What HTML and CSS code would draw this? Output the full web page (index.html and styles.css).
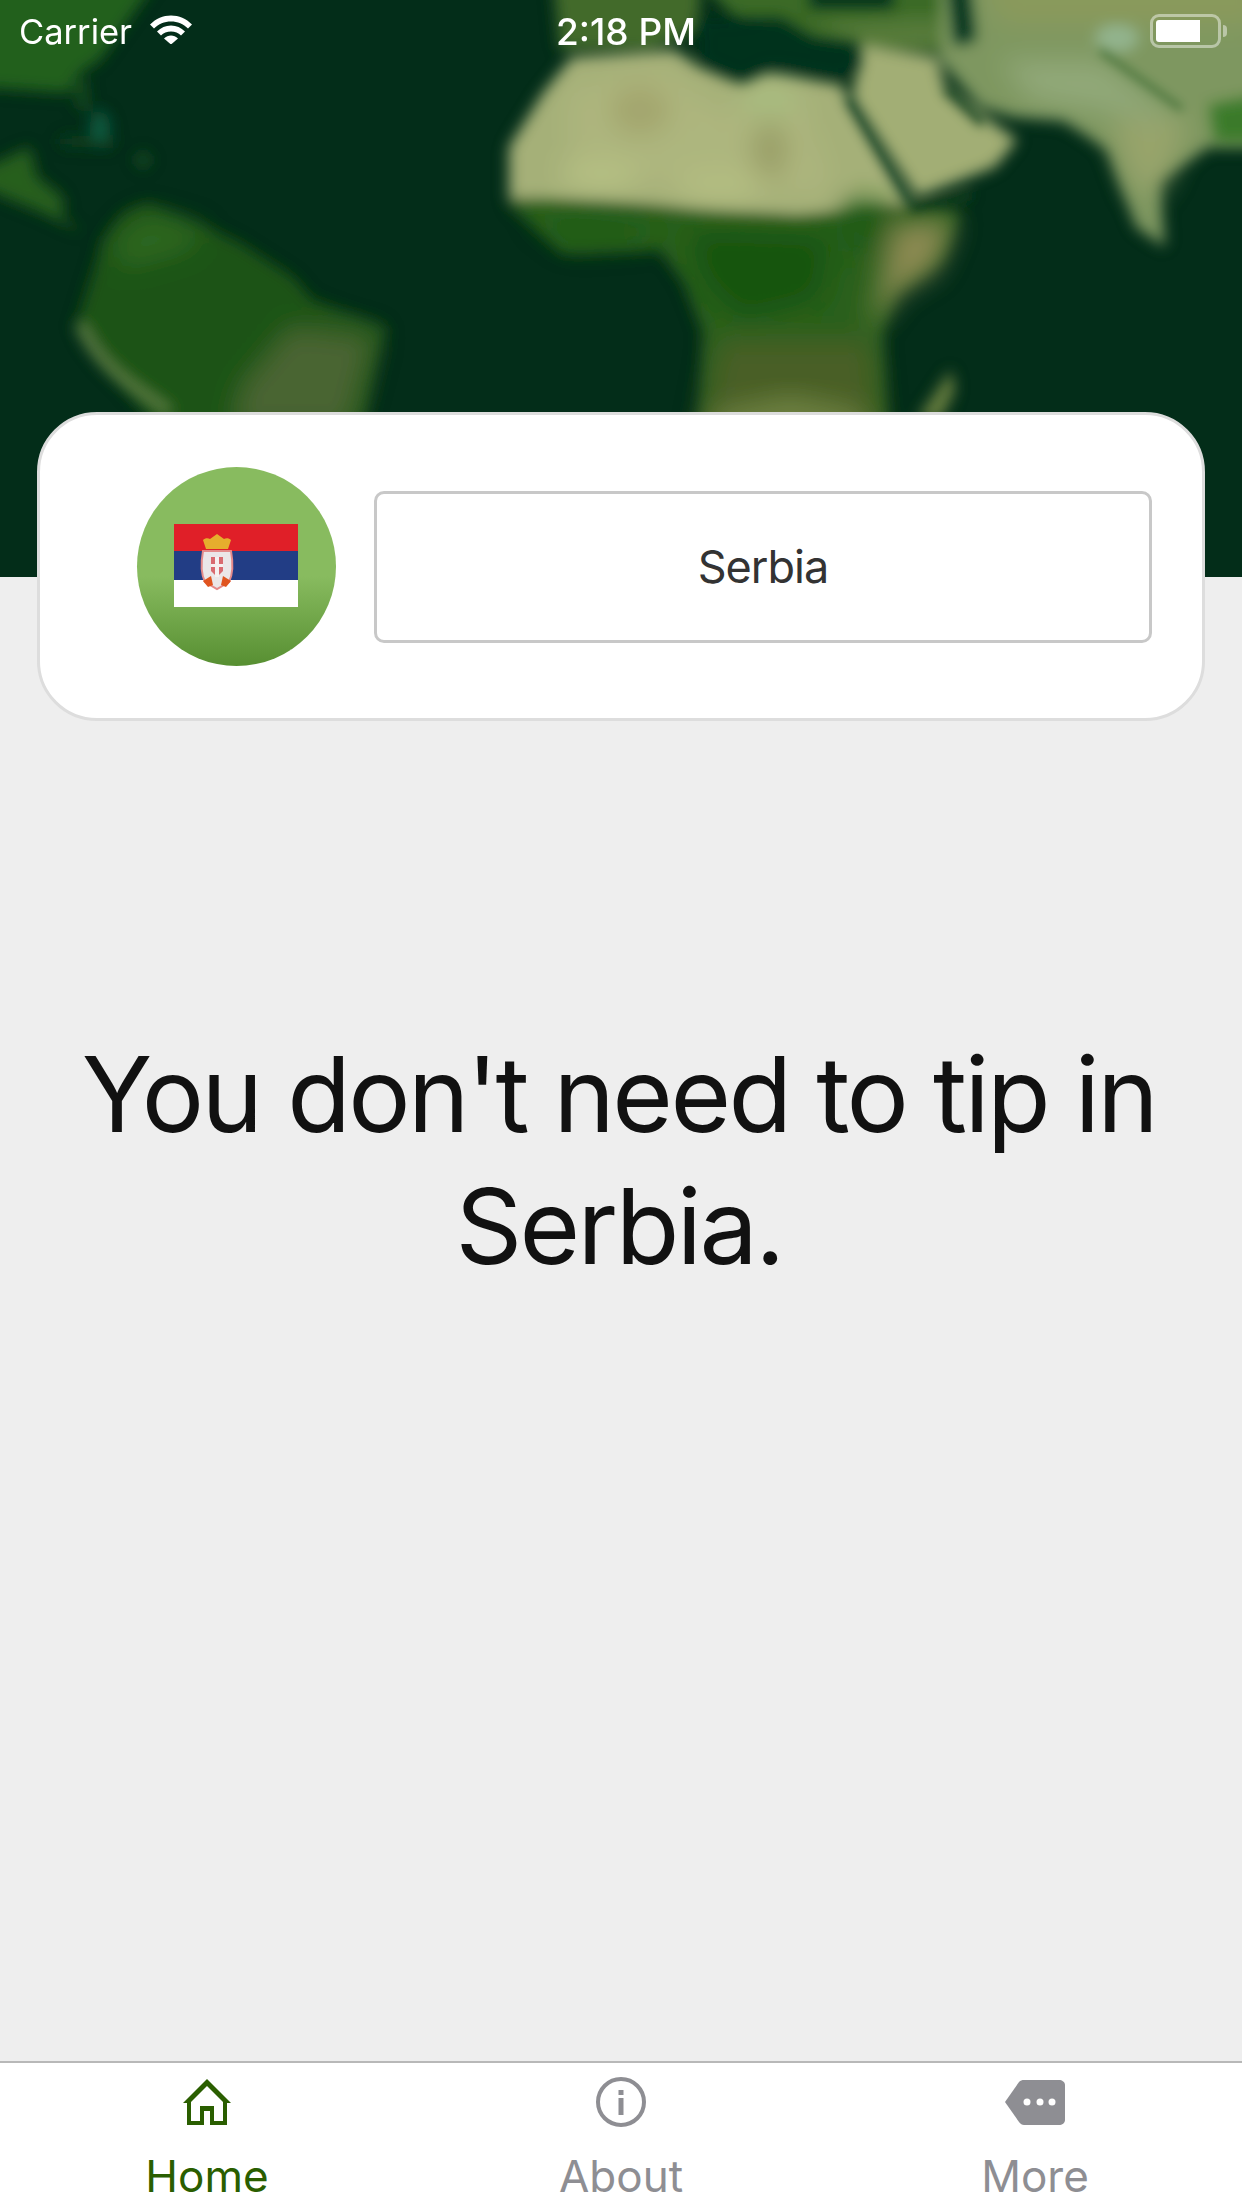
FILE: index.html
```html
<!DOCTYPE html>
<html lang="en">
<head>
    <meta charset="UTF-8">
    <meta name="viewport" content="width=device-width, initial-scale=1.0">
    <title>Tipping</title>
    <link rel="stylesheet" href="styles.css">
</head>
<body>
    <div class="screen">
        <header class="hero">
            <!-- blurred world map -->
            <svg class="map" viewBox="0 0 1242 577" preserveAspectRatio="none" aria-hidden="true">
                <defs>
                    <filter id="blurEdge" x="-20%" y="-20%" width="140%" height="140%">
                        <feGaussianBlur stdDeviation="6"></feGaussianBlur>
                    </filter>
                    <filter id="blurSoft" x="-30%" y="-30%" width="160%" height="160%">
                        <feGaussianBlur stdDeviation="13"></feGaussianBlur>
                    </filter>
                    <filter id="blurLine" x="-30%" y="-30%" width="160%" height="160%">
                        <feGaussianBlur stdDeviation="3"></feGaussianBlur>
                    </filter>
                    <filter id="blurAll" x="0" y="0" width="100%" height="100%">
                        <feGaussianBlur stdDeviation="4"></feGaussianBlur>
                    </filter>
                </defs>
                <rect width="1242" height="577" fill="#032d19"></rect>

                <g filter="url(#blurAll)">
                    <!-- americas -->
                    <g filter="url(#blurEdge)">
                        <path d="M-20 -20H157L100 60L80 73L67 93L-20 87Z" fill="#24601c"></path>
                        <path d="M70 77L87 80L90 113L78 108Z" fill="#154a1c"></path>
                        <path d="M60 137L113 135L113 148L60 146Z" fill="#0f3f1c"></path>
                        <circle cx="143" cy="160" r="7" fill="#1b5320"></circle>
                        <ellipse cx="100" cy="127" rx="10" ry="16" fill="#0e5a40"></ellipse>
                        <path d="M-20 170L30 147L37 177L63 197L63 217L83 233L43 213L-20 187Z" fill="#265f1e"></path>
                        <path d="M103 240L123 213L147 203L207 227L240 243L293 277L313 300L387 327L377 360L360 440H167L107 367L77 323Z" fill="#1b5314"></path>
                    </g>
                    <g filter="url(#blurSoft)">
                        <path d="M115 240L147 215L205 232L190 250L120 270Z" fill="#2e6820"></path>
                        <path d="M290 325L375 335L350 430H230L240 385Z" fill="#4a6530"></path>
                    </g>
                    <path d="M80 323C100 370 140 390 170 412" fill="none" stroke="#627f46" stroke-width="11" filter="url(#blurEdge)"></path>

                    <!-- europe -->
                    <g filter="url(#blurEdge)">
                        <path d="M553 -20H700V30L650 50H560Z" fill="#436a2c"></path>
                        <path d="M700 -20H966V50L860 50H800L740 25Z" fill="#3a6a25"></path>
                    </g>
                    <path d="M810 25L950 20L950 50L860 50Z" fill="#5f8040" filter="url(#blurSoft)"></path>

                    <!-- africa -->
                    <g filter="url(#blurEdge)">
                        <path d="M509 147L543 93L572 57L674 50L694 63L742 82L767 72L840 83L849 100L912 203L905 230L880 240L700 225L509 205Z" fill="#a5b078"></path>
                        <path d="M509 198L600 200L796 215L912 203L961 213L942 260L898 293L883 333L888 440H699L703 333L684 283L660 250L563 253L509 205Z" fill="#2a5f1c"></path>
                    </g>
                    <g filter="url(#blurSoft)">
                        <path d="M570 90L660 70L720 110L800 100L830 190L700 190L570 175Z" fill="#adb67e"></path>
                        <path d="M689 230L830 235L820 300L740 320L700 280Z" fill="#17540f"></path>
                        <path d="M530 215L660 225L650 240L570 245Z" fill="#1f5c14"></path>
                        <path d="M720 340L870 340L880 440H700Z" fill="#495f28"></path>
                        <path d="M844 200L890 205L880 255L845 250Z" fill="#1d5a18"></path>
                        <path d="M895 222L955 220L935 270L900 290L870 330L880 280Z" fill="#8c8a52"></path>
                    </g>
                    <g filter="url(#blurSoft)">
                        <ellipse cx="600" cy="175" rx="40" ry="12" fill="#b7c285"></ellipse>
                        <ellipse cx="720" cy="185" rx="45" ry="14" fill="#b4be82"></ellipse>
                        <ellipse cx="640" cy="110" rx="30" ry="25" fill="#a3a56d"></ellipse>
                        <ellipse cx="770" cy="150" rx="18" ry="30" fill="#9a9f68"></ellipse>
                        <ellipse cx="770" cy="100" rx="30" ry="18" fill="#a9bc80"></ellipse>
                    </g>
                    <path d="M720 410L790 395L860 410L870 440H700Z" fill="#6d8040" filter="url(#blurSoft)"></path>
                    <path d="M917 420L951 370L955 390L940 420Z" fill="#6b8040" filter="url(#blurEdge)"></path>

                    <!-- arabia and asia -->
                    <g filter="url(#blurEdge)">
                        <path d="M860 43L937 57L946 90L985 117L1017 140L995 167L917 197L852 100Z" fill="#a2ae75"></path>
                        <path d="M940 -20H1262V147H1209L1160 180L1165 247L1136 227L1107 150L1063 120L1014 117L980 107L940 60Z" fill="#7e9760"></path>
                    </g>
                    <g filter="url(#blurSoft)">
                        <path d="M1000 60L1100 60L1180 120L1120 115L1030 100Z" fill="#91a878"></path>
                        <path d="M1110 120L1190 120L1160 190L1135 190Z" fill="#98a46c"></path>
                        <path d="M980 -20H1262V25H1000Z" fill="#8a9a5c"></path>
                    </g>
                    <ellipse cx="1117" cy="38" rx="22" ry="14" fill="#93b48e" filter="url(#blurEdge)"></ellipse>
                    <path d="M1209 105L1262 95V142L1215 142Z" fill="#3a7a2a" filter="url(#blurEdge)"></path>

                    <!-- seas cut through the land -->
                    <g filter="url(#blurEdge)" fill="#06301a">
                        <path d="M699 18L781 18L812 37L859 43L859 67L840 80L791 70L767 68L742 82L699 63Z"></path>
                        <path d="M810 -20H893V8L810 8Z"></path>
                        <path d="M948 -20H968L975 40L955 45Z"></path>
                    </g>
                    <g filter="url(#blurLine)" fill="none" stroke-linecap="round">
                        <path d="M850 102L908 200" stroke="#17482a" stroke-width="9"></path>
                        <path d="M914 208L968 196" stroke="#0f3c1c" stroke-width="10"></path>
                        <path d="M948 92L980 122" stroke="#234f2a" stroke-width="9"></path>
                        <path d="M1102 52L1180 108" stroke="#416f36" stroke-width="6"></path>
                    </g>
                </g>
            </svg>
            <div class="status-bar">
                <div class="status-left">
                    <span>Carrier</span>
                    <svg class="wifi" viewBox="0 0 42 28" aria-hidden="true">
                        <path d="M21 0C13 0 6 3 0 9L4 13C8.500 8.500 14.500 6 21 6S33.500 8.500 38 13L42 9C36 3 29 0 21 0Z" fill="#fff"></path>
                        <path d="M21 10C15.500 10 11 12 7 16L11 20C13.500 17.500 17 16 21 16S28.500 17.500 31 20L35 16C31 12 26.500 10 21 10Z" fill="#fff"></path>
                        <path d="M21 20C18.500 20 16 21 14 23L21 29L28 23C26 21 23.500 20 21 20Z" fill="#fff"></path>
                    </svg>
                </div>
                <div class="status-time">2:18 PM</div>
                <div class="status-right">
                    <div class="battery"><div class="battery-level"></div></div>
                    <div class="battery-cap"></div>
                </div>
            </div>
        </header>

        <section class="card">
            <div class="flag-badge">
                <svg class="flag" viewBox="0 0 124 83" aria-hidden="true">
                    <rect width="124" height="27" fill="#e01f28"></rect>
                    <rect y="27" width="124" height="29" fill="#223d85"></rect>
                    <rect y="56" width="124" height="27" fill="#fff"></rect>
                    <!-- crest -->
                    <path d="M32 25L29 16C31 14 34 14 36 15L43 10L50 15C52 14 55 14 57 16L54 25Z" fill="#e6ae2d"></path>
                    <path d="M29 27H57C59 38 59 50 55 58L43 65L31 58C27 50 27 38 29 27Z" fill="#ebe6e8" stroke="#e58a8a" stroke-width="2"></path>
                    <path d="M37 33H49V47L43 53L37 47Z" fill="#d96a70"></path>
                    <path d="M41 33H45V53H41Z" fill="#f6f0f0"></path>
                    <path d="M37 40H49V43H37Z" fill="#f6f0f0"></path>
                    <path d="M29 57L37 52L39 61L34 63Z" fill="#e0541f"></path>
                    <path d="M57 57L49 52L47 61L52 63Z" fill="#e0541f"></path>
                </svg>
            </div>
            <div class="country-box">Serbia</div>
        </section>

        <main class="content">
            <p class="tip-text">You don't need to tip in Serbia.</p>
        </main>

        <nav class="tabs">
            <a class="tab tab-active" href="#home">
                <svg class="tab-icon" viewBox="0 0 60 50" aria-hidden="true">
                    <path fill-rule="evenodd" fill="#2a5e00" d="M30 2L54 26H50V48H33V34H27V48H10V26H6ZM30 9L14 25V44H23V29H37V44H46V25Z"></path>
                </svg>
                <span>Home</span>
            </a>
            <a class="tab" href="#about">
                <svg class="tab-icon" viewBox="0 0 60 50" aria-hidden="true">
                    <circle cx="30" cy="25" r="23" fill="none" stroke="#8e8e93" stroke-width="4"></circle>
                    <rect x="27.500" y="13" width="5" height="5" fill="#8e8e93"></rect>
                    <rect x="27.500" y="21" width="5" height="17" fill="#8e8e93"></rect>
                </svg>
                <span>About</span>
            </a>
            <a class="tab" href="#more">
                <svg class="tab-icon" viewBox="0 0 60 50" aria-hidden="true">
                    <path fill="#8e8e93" d="M0 25L14 5C15.500 3.500 17 3 19 3H54C57 3 60 5 60 8V43C60 46 57 48 54 48H19C17 48 15.500 47 14 45Z"></path>
                    <circle cx="22" cy="25" r="3.500" fill="#fff"></circle>
                    <circle cx="35" cy="25" r="3.500" fill="#fff"></circle>
                    <circle cx="47" cy="25" r="3.500" fill="#fff"></circle>
                </svg>
                <span>More</span>
            </a>
        </nav>
    </div>
</body>
</html>
```

FILE: styles.css
```css
* {
    box-sizing: border-box;
}
body {
    font-family: 'Inter', 'Liberation Sans', sans-serif;
    background: #eeeeee;
    margin: 0;
    padding: 0;
}
.screen {
    display: flex;
    flex-direction: column;
    width: 1242px;
    height: 2208px;
    overflow: hidden;
}
.hero {
    position: relative;
    flex: none;
    height: 577px;
    background: #032d19;
    overflow: hidden;
}
.map {
    position: absolute;
    top: 0;
    left: 0;
    width: 100%;
    height: 100%;
}
.status-bar {
    position: relative;
    display: grid;
    grid-template-columns: 1fr auto 1fr;
    align-items: center;
    height: 62px;
    padding: 0 15px 0 19px;
    color: white;
    font-size: 34.500px;
}
.status-left {
    display: flex;
    align-items: center;
    gap: 18px;
}
.wifi {
    width: 42px;
    height: 29px;
    margin-top: -4px;
}
.status-time {
    font-size: 37px;
    font-weight: 500;
    padding-left: 6px;
}
.status-right {
    display: flex;
    align-items: center;
    justify-content: flex-end;
    gap: 2px;
}
.battery {
    width: 71px;
    height: 34px;
    padding: 3px;
    border: 3px solid rgba(255, 255, 255, 0.45);
    border-radius: 9px;
}
.battery-level {
    width: 44px;
    height: 100%;
    background: white;
    border-radius: 3px 0 0 3px;
}
.battery-cap {
    width: 4px;
    height: 12px;
    background: rgba(255, 255, 255, 0.45);
    border-radius: 0 4px 4px 0;
}
.card {
    position: relative;
    flex: none;
    display: flex;
    align-items: center;
    gap: 38px;
    height: 309px;
    margin: -165px 37px 0;
    padding: 0 50px 0 97px;
    background: white;
    border: 3px solid #dddddd;
    border-radius: 60px;
}
.flag-badge {
    display: flex;
    align-items: center;
    justify-content: center;
    flex: none;
    width: 199px;
    height: 199px;
    margin-top: -1px;
    background: linear-gradient(#88bb5f 55%, #578f32);
    border-radius: 50%;
}
.flag {
    width: 124px;
    height: 83px;
    margin: -1px 2px 0 0;
}
.country-box {
    display: flex;
    align-items: center;
    justify-content: center;
    flex: 1;
    height: 152px;
    color: #333333;
    font-size: 45px;
    letter-spacing: -1px;
    border: 3px solid #c8c8c8;
    border-radius: 10px;
}
.content {
    flex: 1;
    padding-top: 307px;
}
.tip-text {
    margin: 0;
    padding: 0 44px 0 40px;
    color: #111111;
    font-size: 104px;
    letter-spacing: -2.600px;
    line-height: 132px;
    text-align: center;
}
.tabs {
    flex: none;
    display: grid;
    grid-template-columns: repeat(3, 1fr);
    height: 147px;
    background: white;
    border-top: 2px solid #b8b8b8;
}
.tab {
    display: flex;
    flex-direction: column;
    align-items: center;
    padding-top: 14px;
    color: #8e8e93;
    font-size: 44px;
    line-height: 52px;
    text-decoration: none;
}
.tab-active {
    color: #2a5e00;
}
.tab-icon {
    width: 60px;
    height: 50px;
    margin-bottom: 23px;
}
```
